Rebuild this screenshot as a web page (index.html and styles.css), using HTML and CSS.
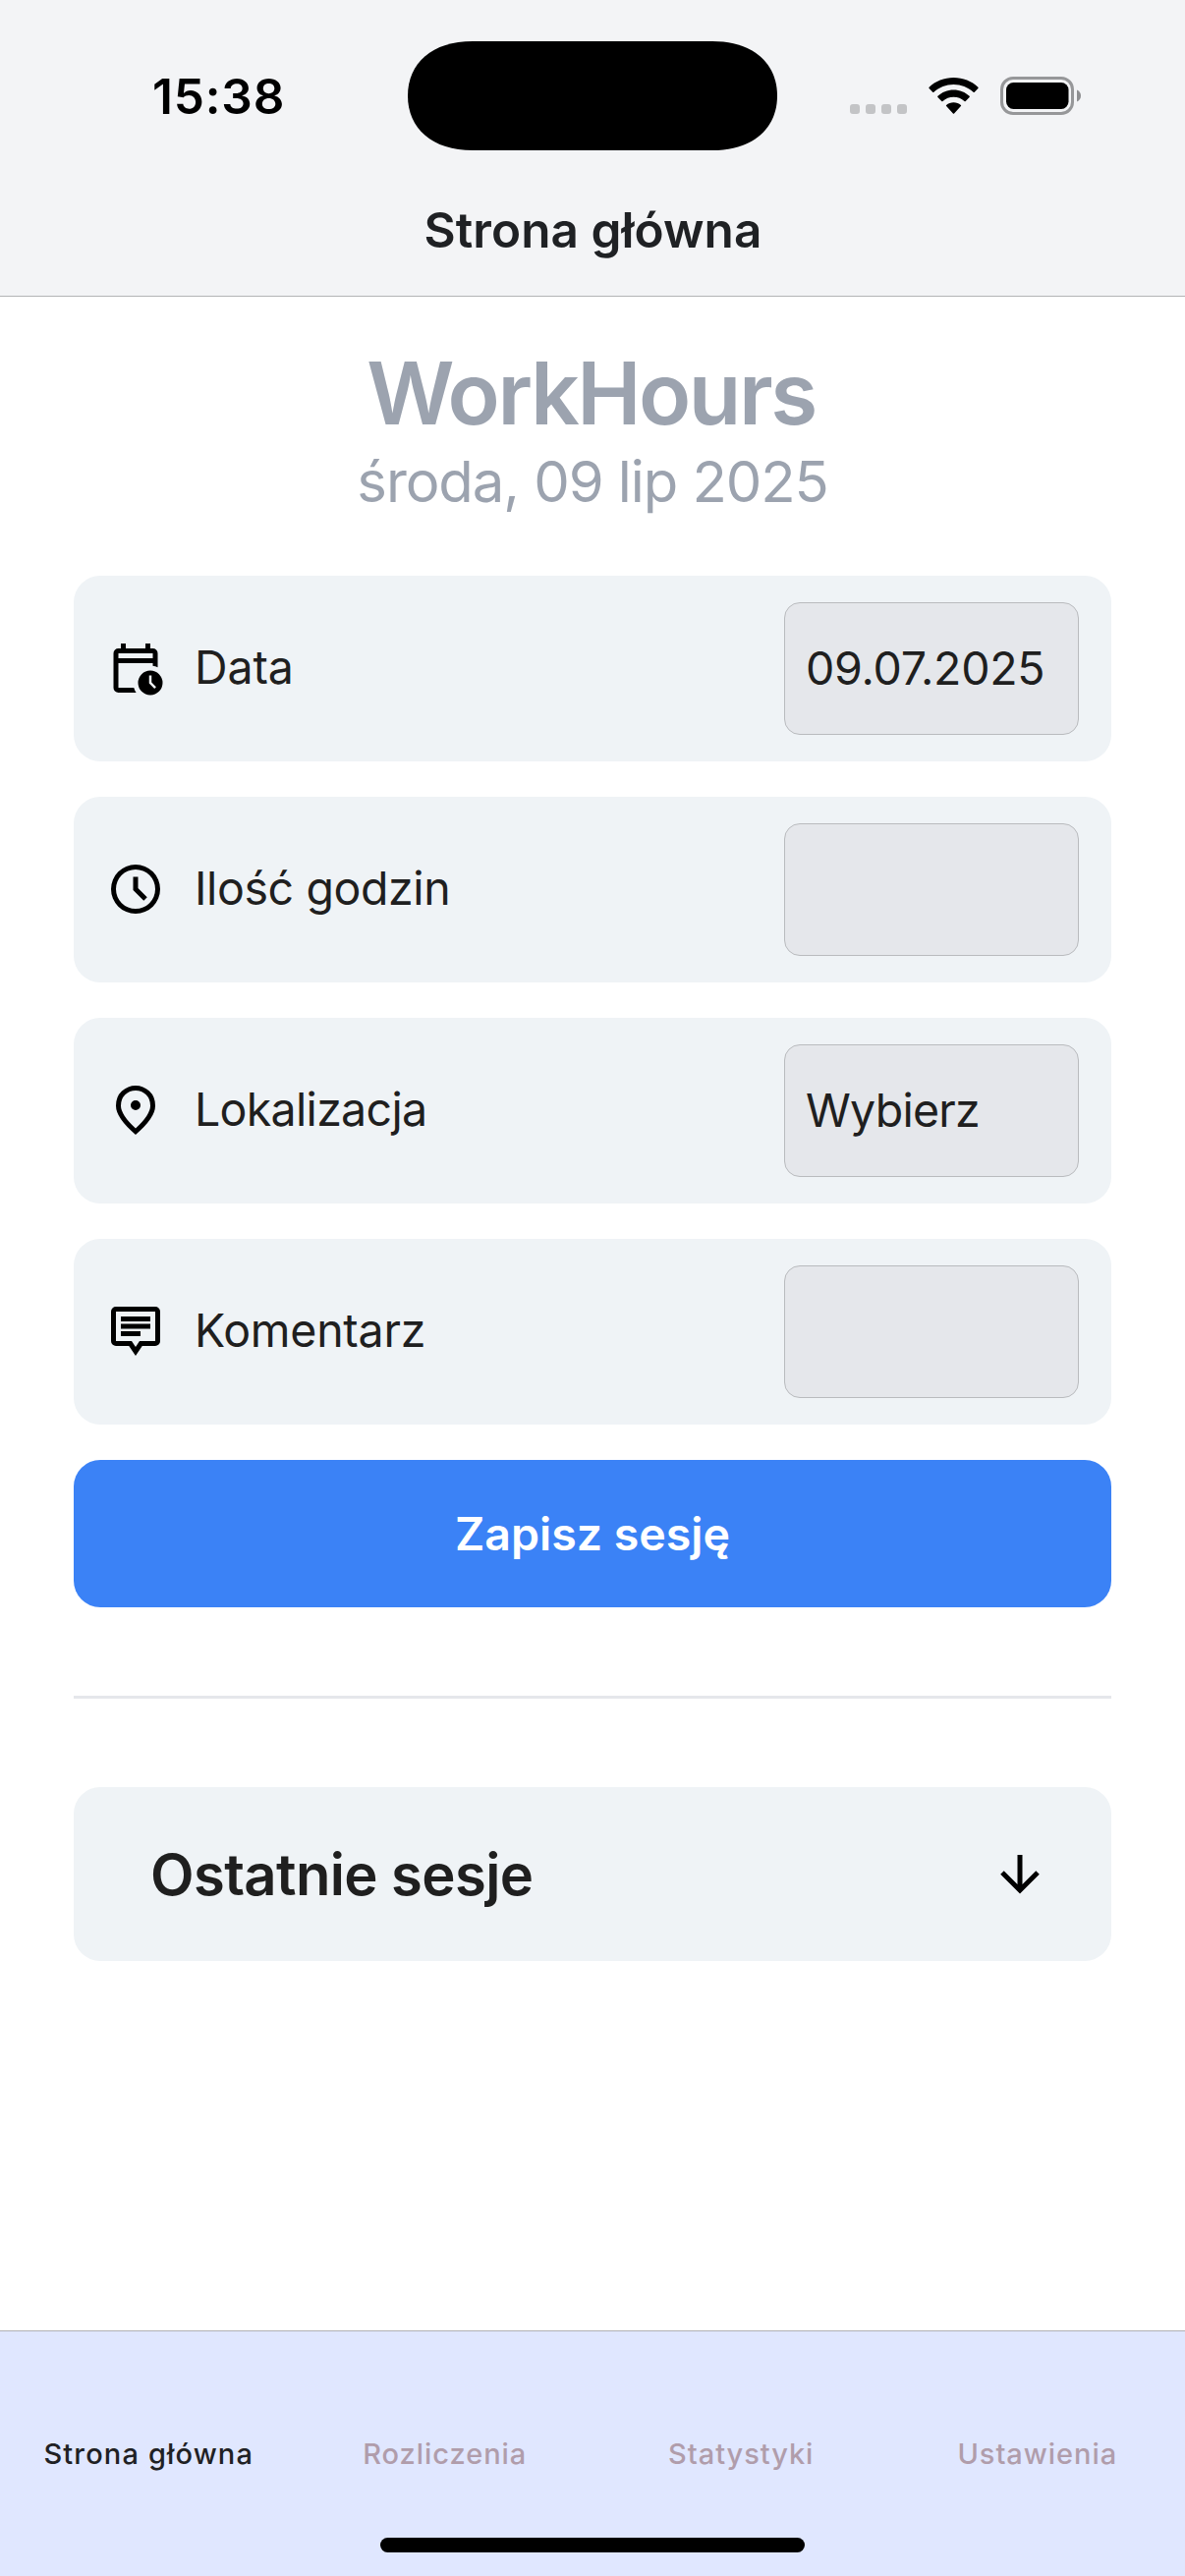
FILE: index.html
```
<!DOCTYPE html>
<html lang="pl">
<head>
<meta charset="utf-8">
<title>WorkHours</title>
<link rel="stylesheet" href="styles.css">
</head>
<body>
<div class="screen">
  <header class="header">
    <div class="status-bar">
      <span class="time">15:38</span>
      <svg class="island" viewBox="0 0 376 111"><path d="M66 0H310C351 0 376 22 376 55.5S351 111 310 111H66C25 111 0 89 0 55.5S25 0 66 0Z"/></svg>
      <div class="status-icons">
        <svg class="cellular" width="58" height="39" viewBox="0 0 58 39" fill="#c3c4c6"><rect x="0" y="28" width="10" height="10" rx="3"/><rect x="16" y="28" width="10" height="10" rx="3"/><rect x="32" y="28" width="10" height="10" rx="3"/><rect x="48" y="28" width="10" height="10" rx="3"/></svg>
        <svg class="wifi" width="51" height="39" viewBox="0 0 51 39"><path d="M25.5 1C35 1 43.900 4.600 50.400 10.700Q51 11.300 50.400 11.900L46.800 15.800Q46.200 16.300 45.600 15.800C40.200 10.800 33.200 8 25.500 8S10.800 10.800 5.400 15.800Q4.800 16.300 4.200 15.800L.6 11.900Q0 11.300 .6 10.700C7.100 4.600 16 1 25.500 1Z"/><path d="M25.500 13.500C31.700 13.500 37.400 15.900 41.600 19.800Q42.200 20.400 41.600 21L37.700 24.900Q37.100 25.400 36.500 24.900C33.600 22.300 29.700 20.700 25.500 20.700S17.400 22.300 14.500 24.900Q13.900 25.400 13.300 24.900L9.400 21Q8.800 20.400 9.400 19.800C13.600 15.900 19.300 13.500 25.500 13.500Z"/><path d="M25.500 26.200C28.300 26.200 30.900 27.200 32.900 28.900Q33.500 29.500 32.900 30.100L26.100 37.400Q25.500 38 24.900 37.400L18.100 30.100Q17.500 29.500 18.100 28.900C20.100 27.200 22.700 26.200 25.500 26.200Z"/></svg>
        <svg class="battery" width="82" height="39" viewBox="0 0 82 39"><rect x="1.500" y="1.500" width="72" height="36" rx="11.500" fill="none" stroke="#969799" stroke-width="3"/><rect x="6" y="6" width="63.500" height="27" rx="7.500"/><path d="M78 13.500C80.600 14.600 82 16.900 82 19.500S80.600 24.400 78 25.500Z" fill="#8e8f91"/></svg>
      </div>
    </div>
    <h1 class="nav-title">Strona główna</h1>
  </header>

  <main class="content">
    <div class="hero">
      <h2 class="app-name">WorkHours</h2>
      <p class="today">środa, 09 lip 2025</p>
    </div>

    <form class="form">
      <div class="row">
        <svg class="icon" viewBox="0 0 24 24"><path d="M5 8h14V6H5v2Zm0 14q-.825 0-1.413-.588T3 20V6q0-.825.588-1.413T5 4h1V2h2v2h8V2h2v2h1q.825 0 1.413.588T21 6v5.675q-.475-.225-.975-.375T19 11.075V10H5v10h6.300q.175.55.413 1.050t.562.95H5Zm13 1q-2.075 0-3.538-1.463T13 18q0-2.075 1.463-3.538T18 13q2.075 0 3.538 1.463T23 18q0 2.075-1.463 3.538T18 23Zm1.675-2.625l.7-.7L18.500 17.800V15h-1v3.200l2.175 2.175Z"/></svg>
        <span class="label label-date">Data</span>
        <span class="field field-date">09.07.2025</span>
      </div>
      <div class="row">
        <svg class="icon" viewBox="0 0 24 24"><path d="M15.300 16.700l1.400-1.400-3.700-3.700V7h-2v5.400l4.300 4.300ZM12 22a10 10 0 1 1 0-20 10 10 0 0 1 0 20Zm0-2a8 8 0 1 0 0-16 8 8 0 0 0 0 16Z"/></svg>
        <span class="label label-hours">Ilość godzin</span>
        <span class="field"></span>
      </div>
      <div class="row">
        <svg class="icon" viewBox="0 0 24 24"><path d="M12 19.350q3.050-2.800 4.525-5.088T18 10.200q0-2.725-1.738-4.463T12 4Q9.475 4 7.738 5.738T6 10.200q0 1.775 1.475 4.063T12 19.350ZM12 22q-4.025-3.425-6.012-6.362T4 10.200q0-3.750 2.413-5.975T12 2q3.175 0 5.588 2.225T20 10.200q0 2.500-1.988 5.438T12 22Zm0-10a2 2 0 1 0 0-4 2 2 0 0 0 0 4Z"/></svg>
        <span class="label label-place">Lokalizacja</span>
        <span class="field field-place">Wybierz</span>
      </div>
      <div class="row">
        <svg class="icon" viewBox="0 0 24 24"><path d="M12 22l-2.700-4H4q-.825 0-1.413-.588T2 16V4q0-.825.588-1.413T4 2h16q.825 0 1.413.588T22 4v12q0 .825-.588 1.413T20 18h-5.300L12 22Zm0-3.600l1.600-2.400H20V4H4v12h6.400L12 18.400ZM6 14h8v-2H6v2Zm0-3h12V9H6v2Zm0-3h12V6H6v2Z"/></svg>
        <span class="label label-comment">Komentarz</span>
        <span class="field"></span>
      </div>
      <button class="save" type="button">Zapisz sesję</button>
    </form>

    <hr class="divider">

    <section class="sessions">
      <h3 class="sessions-title">Ostatnie sesje</h3>
      <svg class="icon" viewBox="0 0 24 24"><path d="M11 4H13V16L18.500 10.500L19.920 11.920L12 19.840L4.080 11.920L5.500 10.500L11 16V4Z"/></svg>
    </section>
  </main>

  <nav class="tab-bar">
    <div class="tabs">
      <a class="tab tab-active">Strona główna</a>
      <a class="tab">Rozliczenia</a>
      <a class="tab">Statystyki</a>
      <a class="tab">Ustawienia</a>
    </div>
    <div class="home-indicator"></div>
  </nav>
</div>
</body>
</html>
```
FILE: styles.css
```
* {
  box-sizing: border-box;
  margin: 0;
  padding: 0;
}

body {
  background: #fff;
  font-family: Inter, "Liberation Sans", sans-serif;
  color: #1f1f1f;
}

.screen {
  display: flex;
  flex-direction: column;
  width: 1206px;
  height: 2622px;
  overflow: hidden;
}

/* Header */
.header {
  height: 302px;
  background: #f3f4f6;
  border-bottom: 1px solid #b3b4b6;
}

.status-bar {
  display: grid;
  grid-template-columns: 415px 376px 1fr;
  align-items: center;
  height: 194px;
  color: #000;
}

.time {
  padding: 2px 0 0 155px;
  font-size: 49.5px;
  font-weight: 600;
  line-height: 60px;
  letter-spacing: 0.84px;
}

.island {
  display: block;
  width: 376px;
  height: 111px;
}

.status-icons {
  display: flex;
  align-items: center;
  padding: 1px 0 0 74px;
}

.wifi {
  margin: 0 22px;
}

.nav-title {
  padding-left: 1px;
  font-size: 49.5px;
  font-weight: 600;
  line-height: 81px;
  letter-spacing: 0.06px;
  text-align: center;
  color: #1f2124;
}

/* Content */
.content {
  display: flex;
  flex: 1;
  flex-direction: column;
  padding: 53px 75px 0;
}

.hero {
  margin-bottom: 51px;
  text-align: center;
  color: #9ca3af;
}

.app-name {
  padding-right: 3px;
  font-size: 87.5px;
  font-weight: 600;
  line-height: 90px;
  letter-spacing: -2.5px;
}

.today {
  font-size: 58px;
  font-weight: 400;
  line-height: 90px;
  letter-spacing: -1.08px;
}

.form {
  display: flex;
  flex-direction: column;
  gap: 36px;
}

.row {
  display: flex;
  align-items: center;
  height: 189px;
  padding: 0 33px;
  border-radius: 27px;
  background: #eff3f6;
}

.icon {
  display: block;
  flex: none;
  width: 60px;
  height: 60px;
  fill: #000;
}

.row .icon {
  margin-bottom: 1px;
}

.label {
  flex: 1;
  padding: 0 0 3px 30px;
  font-size: 46.5px;
  line-height: 60px;
}

.label-date {
  letter-spacing: -0.14px;
}

.label-hours {
  letter-spacing: -0.4px;
}

.label-place {
  letter-spacing: -0.7px;
}

.label-comment {
  letter-spacing: -0.25px;
}

.field {
  width: 300px;
  height: 135px;
  padding-left: 21px;
  border: 1px solid #b9bbbe;
  border-radius: 16px;
  background: #e5e7eb;
  font-size: 46.5px;
  line-height: 133px;
}

.field-date {
  letter-spacing: -0.25px;
}

.field-place {
  letter-spacing: -0.75px;
}

.save {
  height: 150px;
  border: 0;
  border-radius: 27px;
  background: #3b82f6;
  color: #fff;
  font: 600 46.5px/150px Inter, "Liberation Sans", sans-serif;
}

.divider {
  height: 3px;
  margin: 90px 0;
  border: 0;
  background: #e5e7eb;
}

.sessions {
  display: flex;
  align-items: center;
  justify-content: space-between;
  height: 177px;
  padding: 0 63px 0 78px;
  border-radius: 27px;
  background: #eff3f6;
}

.sessions-title {
  font-size: 58px;
  font-weight: 600;
  line-height: 80px;
  letter-spacing: -0.62px;
}

/* Bottom navigation */
.tab-bar {
  display: flex;
  flex-direction: column;
  align-items: center;
  height: 250px;
  border-top: 1px solid #b1b1b4;
  background: #e0e7ff;
}

.tabs {
  display: grid;
  grid-template-columns: repeat(4, 1fr);
  align-items: center;
  width: 100%;
  height: 210px;
  padding-top: 39px;
}

.tab {
  padding-left: 1px;
  font-size: 29px;
  font-weight: 500;
  line-height: 40px;
  letter-spacing: 0.95px;
  text-align: center;
  color: #b09dab;
}

.tab-active {
  letter-spacing: 1.15px;
  color: #1f2124;
}

.home-indicator {
  width: 432px;
  height: 15px;
  border-radius: 8px;
  background: #000;
}
```
